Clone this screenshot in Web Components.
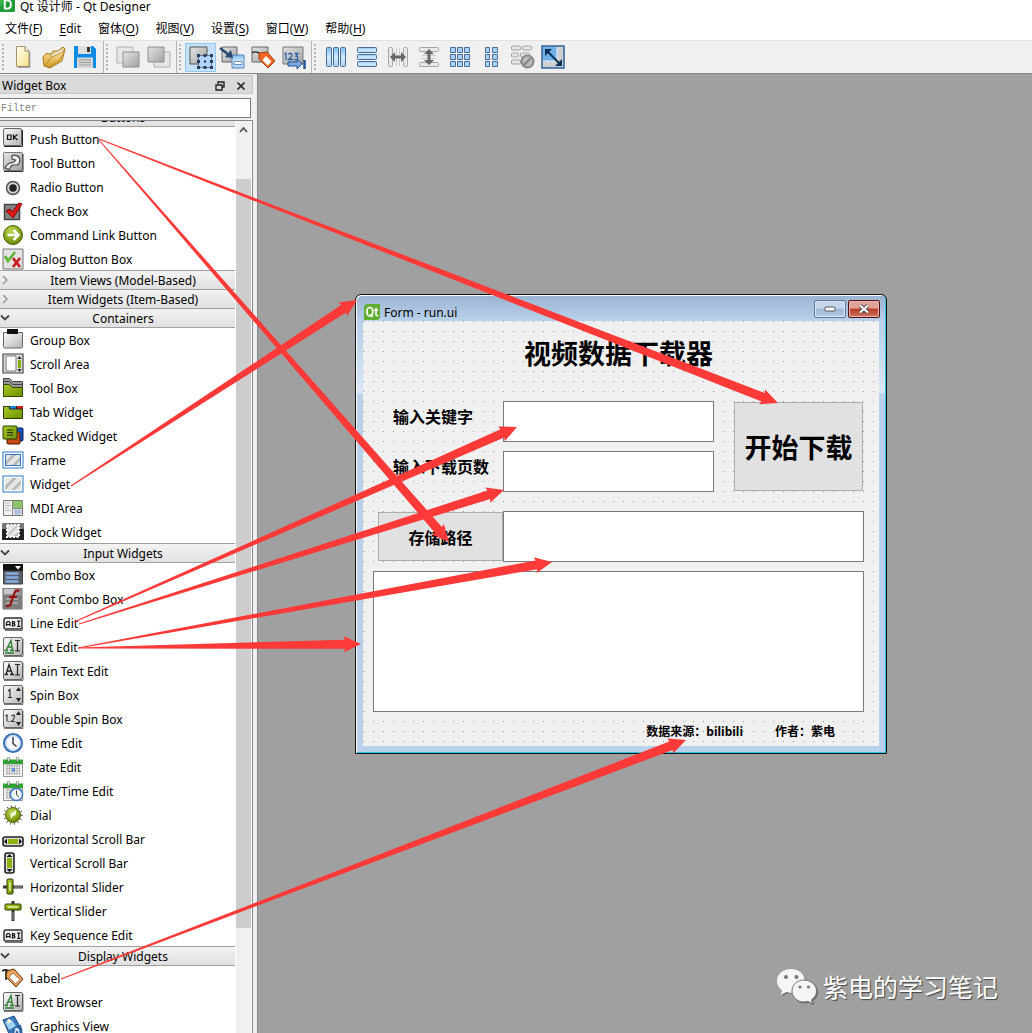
<!DOCTYPE html>
<html lang="zh-CN">
<head>
<meta charset="utf-8">
<title>Qt 设计师 - Qt Designer</title>
<style>
  html, body { margin: 0; height: 100%; }
  body { overflow: hidden; font: 12px/16px "Noto Sans", "Noto Sans CJK SC", sans-serif; color: #000; background: #fff; }
</style>
</head>
<body>
<designer-app>
  <designer-titlebar slot="title">Qt 设计师 - Qt Designer</designer-titlebar>
  <menu-bar slot="menu">
    <menu-entry key="F">文件</menu-entry>
    <menu-entry latin="dit" key="E"></menu-entry>
    <menu-entry key="O">窗体</menu-entry>
    <menu-entry key="V">视图</menu-entry>
    <menu-entry key="S">设置</menu-entry>
    <menu-entry key="W">窗口</menu-entry>
    <menu-entry key="H">帮助</menu-entry>
  </menu-bar>
  <tool-bar slot="tools">
    <tool-group>
      <tool-action icon="new" label="New"></tool-action>
      <tool-action icon="open" label="Open"></tool-action>
      <tool-action icon="save" label="Save"></tool-action>
    </tool-group>
    <tool-group>
      <tool-action icon="toback" label="Send to Back"></tool-action>
      <tool-action icon="tofront" label="Bring to Front"></tool-action>
    </tool-group>
    <tool-group>
      <tool-action icon="editwidgets" label="Edit Widgets" active></tool-action>
      <tool-action icon="signals" label="Edit Signals/Slots"></tool-action>
      <tool-action icon="buddies" label="Edit Buddies"></tool-action>
      <tool-action icon="taborder" label="Edit Tab Order"></tool-action>
    </tool-group>
    <tool-group last>
      <tool-action icon="layh" label="Lay Out Horizontally"></tool-action>
      <tool-action icon="layv" label="Lay Out Vertically"></tool-action>
      <tool-action icon="splith" label="Horizontal Splitter"></tool-action>
      <tool-action icon="splitv" label="Vertical Splitter"></tool-action>
      <tool-action icon="grid" label="Lay Out in a Grid"></tool-action>
      <tool-action icon="formlay" label="Lay Out in a Form"></tool-action>
      <tool-action icon="breaklay" label="Break Layout"></tool-action>
      <tool-action icon="adjust" label="Adjust Size"></tool-action>
    </tool-group>
  </tool-bar>
  <widget-dock slot="dock">
    <widget-category name="Buttons" open>
      <widget-item icon="push">Push Button</widget-item>
      <widget-item icon="tool">Tool Button</widget-item>
      <widget-item icon="radio">Radio Button</widget-item>
      <widget-item icon="check">Check Box</widget-item>
      <widget-item icon="command">Command Link Button</widget-item>
      <widget-item icon="dialog">Dialog Button Box</widget-item>
    </widget-category>
    <widget-category name="Item Views (Model-Based)"></widget-category>
    <widget-category name="Item Widgets (Item-Based)"></widget-category>
    <widget-category name="Containers" open>
      <widget-item icon="group">Group Box</widget-item>
      <widget-item icon="scrollarea">Scroll Area</widget-item>
      <widget-item icon="toolbox">Tool Box</widget-item>
      <widget-item icon="tab">Tab Widget</widget-item>
      <widget-item icon="stacked">Stacked Widget</widget-item>
      <widget-item icon="frame">Frame</widget-item>
      <widget-item icon="widget">Widget</widget-item>
      <widget-item icon="mdi">MDI Area</widget-item>
      <widget-item icon="dock">Dock Widget</widget-item>
    </widget-category>
    <widget-category name="Input Widgets" open>
      <widget-item icon="combo">Combo Box</widget-item>
      <widget-item icon="fontcombo">Font Combo Box</widget-item>
      <widget-item icon="lineedit">Line Edit</widget-item>
      <widget-item icon="textedit">Text Edit</widget-item>
      <widget-item icon="plaintext">Plain Text Edit</widget-item>
      <widget-item icon="spin">Spin Box</widget-item>
      <widget-item icon="dspin">Double Spin Box</widget-item>
      <widget-item icon="time">Time Edit</widget-item>
      <widget-item icon="date">Date Edit</widget-item>
      <widget-item icon="datetime">Date/Time Edit</widget-item>
      <widget-item icon="dial">Dial</widget-item>
      <widget-item icon="hscroll">Horizontal Scroll Bar</widget-item>
      <widget-item icon="vscroll">Vertical Scroll Bar</widget-item>
      <widget-item icon="hslider">Horizontal Slider</widget-item>
      <widget-item icon="vslider">Vertical Slider</widget-item>
      <widget-item icon="lineedit">Key Sequence Edit</widget-item>
    </widget-category>
    <widget-category name="Display Widgets" open>
      <widget-item icon="label">Label</widget-item>
      <widget-item icon="textedit">Text Browser</widget-item>
      <widget-item icon="graphics">Graphics View</widget-item>
    </widget-category>
  </widget-dock>
  <form-window slot="canvas" caption="Form - run.ui">
    <download-form></download-form>
  </form-window>
  <account-mark slot="canvas">紫电的学习笔记</account-mark>
  <arrow-layer slot="overlay"></arrow-layer>
</designer-app>

<script>
const DEFS = `<defs>
<linearGradient id="g" x1="0" y1="0" x2="1" y2="1"><stop offset="0" stop-color="#fdfdfd"/><stop offset="1" stop-color="#b4b4b4"/></linearGradient>
<linearGradient id="dg" x1="0" y1="0" x2="1" y2="1"><stop offset="0" stop-color="#e4e4e4"/><stop offset="1" stop-color="#a2a2a2"/></linearGradient>
<linearGradient id="b" x1="0" y1="0" x2="0" y2="1"><stop offset="0" stop-color="#7dbdf0"/><stop offset=".5" stop-color="#d4ecfd"/><stop offset="1" stop-color="#a9d2f5"/></linearGradient>
<linearGradient id="gn" x1="0" y1="0" x2="1" y2="1"><stop offset="0" stop-color="#a9cc28"/><stop offset="1" stop-color="#6d8f00"/></linearGradient>
<radialGradient id="rb" cx=".4" cy=".3" r=".8"><stop offset="0" stop-color="#b9d94c"/><stop offset="1" stop-color="#5f7f00"/></radialGradient>
<linearGradient id="y" x1="0" y1="0" x2="1" y2="1"><stop offset="0" stop-color="#fffef0"/><stop offset="1" stop-color="#f5e08a"/></linearGradient>
<linearGradient id="or" x1="0" y1="0" x2="0" y2="1"><stop offset="0" stop-color="#fbe7a4"/><stop offset="1" stop-color="#d9a032"/></linearGradient>
</defs>`;

const box = '<rect x="1.5" y="1.5" width="19" height="18" rx="1.5" fill="url(#g)" stroke="#666"/><path d="M2 20.5h19V3" fill="none" stroke="#222" opacity=".6"/>';
const spinArrows = '<path d="M14 7l2.500-4 2.500 4zM14 14l2.500 4 2.500-4z" fill="#222"/>';
const abi = '<rect x="2" y="6" width="18" height="11" rx="1.500" fill="#eee" stroke="#333" stroke-width="1.500"/><path d="M20.500 8v10.500H3" fill="none" stroke="#777"/><path d="M4.500 14v-3l1-1.500h1.500l1 1.500v3M4.500 12.500h3.500M10.500 9.500v4.500h1.500l1-1-1-1.500h-1.500 1.500l.8-1-.8-1zM15 9h3.500M15 14.500h3.500M16.700 9v5.500" fill="none" stroke="#111" stroke-width="1.200"/>';
const hatch = '<rect x="1" y="3" width="20" height="16" fill="#fff" stroke="#2f74c0"/><rect x="3" y="5" width="16" height="12" fill="#e6e6e6"/><path d="M3 13l8-8h4L3 17zM9 17L19 7v4l-6 6z" fill="#b9b9b9"/>';
const clock = '<circle cx="11" cy="11" r="9" fill="#f4f7fb" stroke="#3b74b8" stroke-width="2.200"/><circle cx="11" cy="11" r="7.200" fill="none" stroke="#b9cde5"/><path d="M11 5v6.500l3.500 3" fill="none" stroke="#333" stroke-width="1.400"/>';
const cal = '<path d="M1.500 8h19v12.500h-19z" fill="#f3f3f3" stroke="#999"/><path d="M1 3.500h20V8H1z" fill="#2ea52e"/><path d="M6.500 1v5M15.500 1v5" stroke="#666" stroke-width="2"/><path d="M6.500 1.500v3.500M15.500 1.500v3.500" stroke="#eee"/><path d="M4 10h14M4 12.500h14M4 15h14M4 17.500h14M5 9v10M7.500 9v10M10 9v10M12.500 9v10M15 9v10M17.500 9v10" stroke="#aaa" stroke-width=".8"/>';
const ibeam = '<rect x="1.500" y="1.500" width="19" height="18" rx="1.500" fill="url(#g)" stroke="#666"/><path d="M2 20.500h19V3" fill="none" stroke="#444" opacity=".7"/><path d="M13 4.500h2l.5 .5.500-.5h2M13 15h2l.5-.5.500 .5h2M15.500 5v10" fill="none" stroke="#222" stroke-width="1.200"/>';

const ICONS = {
  qtd: '<rect width="22" height="22" rx="3" fill="#35b04a"/><path d="M0 14L22 2v17a3 3 0 0 1-3 3H0z" fill="#219a38"/><path d="M7 5h4q5 0 5 6t-5 6H7z" fill="none" stroke="#fff" stroke-width="2.800"/>',
  qt: '<path d="M3 0h19v19l-3 3H0V3z" fill="#5fae2f"/><ellipse cx="8" cy="10.500" rx="4" ry="6" fill="none" stroke="#fff" stroke-width="2.400"/><path d="M9 14l3 4M16.500 5v9q0 2.500 3 2M13.500 8.500h6" fill="none" stroke="#fff" stroke-width="2.200"/>',
  new: '<path d="M3.500 .5h8.500l4 4v16H3.500z" fill="url(#y)" stroke="#a39769"/><path d="M12 .5v4.500h4" fill="#fff" stroke="#8f8252"/><path d="M16.800 6v15.300H5" fill="none" stroke="#555" opacity=".6"/>',
  open: '<path d="M0 20l-1-9 3-3.500 5 .5 2-3h5l5-4 2 2-3 12-12 7z" fill="url(#or)" stroke="#a87818"/><path d="M6 10l12-7 2 1-4 7z" fill="#f5f5ef" stroke="#b7a26a" stroke-width=".7"/><path d="M1 20.500l6-9 14-7-5.500 9.500-10 6.500z" fill="url(#or)" stroke="#b7882c"/>',
  save: '<path d="M-1 0h19l3 3v19H-1z" fill="#0c8be6"/><path d="M3 0h13v8H3z" fill="#dedede"/><path d="M12 1h3v5h-3z" fill="#333"/><path d="M2 11.500h16V22H2z" fill="#d5d5d5"/><path d="M4 14h12M4 16.500h12M4 19h12" stroke="#999"/>',
  toback: '<path d="M0 1h16v16H0z" fill="#e6e6e6" stroke="#b0b0b0"/><path d="M6 6h16v15H6z" fill="url(#dg)" stroke="#909090"/>',
  tofront: '<path d="M6 6h16v15H6z" fill="#e6e6e6" stroke="#b0b0b0"/><path d="M0 1h16v15H0z" fill="url(#dg)" stroke="#909090"/>',
  editwidgets: '<path d="M0 1h17v17H0z" fill="url(#dg)" stroke="#555"/><path d="M8.500 9.500h13v12h-13z" fill="#b4d5fb" stroke="#222" stroke-dasharray="1 1"/><path d="M7 8h3v3H7zM13.500 8h3v3h-3zM20 8h3v3h-3zM7 14h3v3H7zM20 14h3v3h-3zM7 20h3v3H7zM13.500 20h3v3h-3zM20 20h3v3h-3z" fill="#233f66"/><path d="M14 14.500h2v2h-2z" fill="#123"/>',
  signals: '<path d="M1 1h15v15H1z" fill="url(#dg)" stroke="#666"/><path d="M11 9h12v13H11z" fill="url(#b)" stroke="#5683bd"/><path d="M13 15.500h8v3h-8z" fill="#fff" stroke="#5279ad" stroke-width=".8"/><path d="M-1 2l9 7" stroke="#294b70" stroke-width="2.500"/><path d="M12 12l-8-1 6-7z" fill="#294b70"/>',
  buddies: '<path d="M0 1h16v15H0z" fill="url(#dg)" stroke="#666"/><path d="M0 7q5-3 9 2" fill="none" stroke="#222" stroke-width="1.300"/><path d="M7 7l8-1 8 9-7 7-9-9z" fill="#f26522" stroke="#a8400c"/><path d="M14 10l5.500 5.500-4 4-5-5.500z" fill="#fff"/>',
  taborder: '<path d="M0 1h20v17H0z" fill="url(#dg)" stroke="#777"/><path d="M1.500 8.500l1.500-1.500v7M5.500 8.500q2-2.500 3.500 0 0 2-3.500 5H10M11.500 7.500h3.500l-2 2.500q2.500 .5 1.500 3-1 1.500-3.500 .5" fill="none" stroke="#2d5fa5" stroke-width="1.300"/><path d="M5 16h9v-3l5 5-5 5v-3H5z" fill="#7ba9e0" stroke="#24518f"/><path d="M21.500 14v9" stroke="#24518f" stroke-width="2.500"/>',
  layh: '<g fill="url(#b)" stroke="#4b6c96"><rect x="1.500" y="1.500" width="5" height="19" rx="1"/><rect x="8.500" y="1.500" width="5" height="19" rx="1"/><rect x="15.500" y="1.500" width="5" height="19" rx="1"/></g>',
  layv: '<g fill="url(#b)" stroke="#4b6c96"><rect x="1.500" y="1.500" width="19" height="5" rx="1"/><rect x="1.500" y="8.500" width="19" height="5" rx="1"/><rect x="1.500" y="15.500" width="19" height="5" rx="1"/></g>',
  splith: '<g fill="#e9e9e9" stroke="#a5a5a5"><rect x="1.500" y="1.500" width="4" height="19" rx="1"/><rect x="16.500" y="1.500" width="4" height="19" rx="1"/></g><path d="M9.500 2v18M12.500 2v18" stroke="#ccc"/><path d="M3 11l5-5v3.500h6V6l5 5-5 5v-3.500H8V16z" fill="#666"/>',
  splitv: '<g fill="#e9e9e9" stroke="#a5a5a5"><rect x="1.500" y="1.500" width="19" height="4" rx="1"/><rect x="1.500" y="16.500" width="19" height="4" rx="1"/></g><path d="M4 9.500h14M4 12.500h14" stroke="#ccc"/><path d="M11 3l5 5h-3.500v6H16l-5 5-5-5h3.500V8H6z" fill="#666"/>',
  grid: '<path d="M1.500 1.500h5v5h-5zM8.500 1.500h5v5h-5zM15.500 1.500h5v5h-5zM1.500 8.500h5v5h-5zM8.500 8.500h5v5h-5zM15.500 8.500h5v5h-5zM1.500 15.500h5v5h-5zM8.500 15.500h5v5h-5zM15.500 15.500h5v5h-5z" fill="#a5d5f8" stroke="#4b6c96"/>',
  formlay: '<path d="M5.500 1.500h4v5h-4zM12.500 1.500h5v5h-5zM5.500 8.500h4v5h-4zM12.500 8.500h5v5h-5zM5.500 15.500h4v5h-4zM12.500 15.500h5v5h-5z" fill="#a5d5f8" stroke="#4b6c96"/>',
  breaklay: '<g fill="#e6e6e6" stroke="#a5a5a5"><rect x=".5" y="0" width="9" height="4" rx="1"/><rect x="11.500" y="0" width="9" height="4" rx="1"/><rect x=".5" y="7" width="7" height="4" rx="1"/><rect x="9.500" y="7" width="9" height="4" rx="1"/><rect x=".5" y="14" width="9" height="4" rx="1"/></g><circle cx="16.500" cy="15.500" r="6" fill="#bbb" stroke="#8a8a8a" stroke-width="2"/><path d="M13 19l7-7" stroke="#858585" stroke-width="2"/>',
  adjust: '<path d="M0 0h22v22H0z" fill="#cfcfcf" stroke="#2f5f9b" stroke-width="1.500"/><path d="M1 1h14v14H1z" fill="#6fb0e8"/><path d="M1 15h14V1" fill="none" stroke="#e8f2fc"/><path d="M5 5l13 13" stroke="#0b3157" stroke-width="2"/><path d="M3 3h7l-7 7zM20 20h-7l7-7z" fill="#0b3157"/>',
  push: '<rect x="1.500" y=".5" width="18" height="17" rx="1.500" fill="url(#g)" stroke="#666"/><path d="M2 18.500h18.500V2" fill="none" stroke="#222"/><path d="M5.500 7h3.500v4.500H5.500zM11.500 6.500v5.500M15.500 6.500l-3.500 2.500 3.500 3" fill="none" stroke="#111" stroke-width="1.200"/>',
  tool: '<rect x="1.500" y=".5" width="19" height="18" rx="1" fill="url(#dg)" stroke="#777"/><path d="M2 19.500h19V2" fill="none" stroke="#333"/><path d="M10 3.500q5-1.500 7.500 2.500 1.500 5-2.500 7l-5 0-3 4.500-4-1.500q1-3.500 5-5l4-1 1.500-2-3.500-1z" fill="#eee" stroke="#444" stroke-width="1.200"/>',
  radio: '<circle cx="11" cy="12" r="6.500" fill="#d0d0d0" stroke="#555" stroke-width="1.500"/><circle cx="11" cy="12" r="3.700" fill="#222"/>',
  check: '<path d="M2.500 4.500h15v15h-15z" fill="#858585" stroke="#444" stroke-width="1.500"/><path d="M4 11l4-2 2 3 7-9 3 1-9 14z" fill="#e11b1b" stroke="#800"/>',
  command: '<circle cx="11" cy="11" r="9.500" fill="url(#rb)" stroke="#4c6107"/><path d="M5.500 11h10M11.500 6l5 5-5 5" fill="none" stroke="#fff" stroke-width="2.500"/>',
  dialog: '<path d="M1 1h20v20H1z" fill="#e2e2e2" stroke="#777"/><path d="M3 8l3 5 7-9" fill="none" stroke="#5bb531" stroke-width="2.500"/><path d="M11 10l7 9M18 10l-7 9" stroke="#c82020" stroke-width="2.800"/>',
  group: '<path d="M1.500 3.500h19v14q0 1.500-1.500 1.500H3q-1.500 0-1.500-1.500z" fill="url(#g)" stroke="#666"/><path d="M5 0h11v5H5z" fill="#111"/>',
  scrollarea: '<path d="M1 1h20v19H1z" fill="#ddd" stroke="#444" stroke-width="1.200"/><path d="M4 3h10v15H4z" fill="#fff" stroke="#777"/><path d="M16 7h3v8h-3z" fill="#86ad0b"/><path d="M15.500 6L17.500 3l2 3zM15.500 16l2 3 2-3z" fill="#222"/>',
  toolbox: '<path d="M1.500 1.500h6l3 3h10v15h-19z" fill="#999" stroke="#444"/><path d="M1.500 4.500h6l3 3h10" fill="none" stroke="#444"/><path d="M1.500 7.500h6l3 3h10v9h-19z" fill="url(#gn)" stroke="#354a00"/>',
  tab: '<path d="M1.500 5.500h19v12h-19z" fill="url(#gn)" stroke="#2b3a00"/><path d="M8 5h6v3H8z" fill="#1688d8"/><path d="M15 5h6v3h-6z" fill="#d32020"/><path d="M14.500 5v3M7.500 8h13M7.500 5v3" stroke="#222"/>',
  stacked: '<rect x="9" y="3" width="12" height="13" rx="1" fill="#1252c8" stroke="#061f52"/><rect x="5" y="7" width="13" height="12" rx="1" fill="#c44a17" stroke="#4c1800"/><rect x="1" y="1" width="14" height="13" rx="1" fill="url(#gn)" stroke="#2c3c00"/><path d="M5 5h6M5 7.500h6M5 10h6" stroke="#222"/>',
  frame: hatch + '<path d="M3.500 5.500h15v11h-15z" fill="none" stroke="#2f74c0"/>',
  widget: hatch,
  mdi: '<path d="M1.500 3.500h19v15h-19z" fill="#f1f1f1" stroke="#777"/><path d="M11 4h9.500v7H11z" fill="#8cc36b"/><path d="M10.500 4v14.500M10.500 11.500h10" stroke="#888"/><path d="M3 6h5M3 8.500h6M3 11h4M3 13.500h6" stroke="#bbb"/><path d="M12 14h8M12 16h8M14 12v6M17 12v6" stroke="#8ba9d2"/>',
  dock: '<path d="M0 2h22v17H0z" fill="#222"/><path d="M0 2h22v6H0z" fill="#777"/><path d="M5 4h12v12H5z" fill="#e7e7e7" stroke="#fff" stroke-width="2" stroke-dasharray="2 1.500"/><path d="M6 13l8-8h2L7 14zM12 15l4-4v4z" fill="#bcbcbc"/>',
  combo: '<path d="M1 0h20v7H1z" fill="#111"/><path d="M13 2h6L16 5.500z" fill="#fff"/><path d="M1.500 7h19v13h-19z" fill="#5a5f68" stroke="#444"/><path d="M3.500 9.500h13M3.500 13.500h13M3.500 17.500h13" stroke="#82aee2" stroke-width="2.500"/>',
  fontcombo: '<path d="M1 0h19v21H1z" fill="#999" stroke="#666"/><path d="M2 7h17v13H2z" fill="#7d7d7d"/><path d="M2 1h10v5H2z" fill="#c6c6c6"/><path d="M4 11h12M4 15h12" stroke="#a5a5a5" stroke-width="2"/><path d="M17.500 3q-4-2-5.500 3l-3 9q-1 4-5 3M7 9h8" fill="none" stroke="#9a1010" stroke-width="2.200"/>',
  lineedit: abi,
  textedit: ibeam + '<path d="M2.500 14.500h3.500M8 14.500h4M4 14.500L9 4.500l1.500 10M6 11h4M3 17h9" fill="none" stroke="#267d2c" stroke-width="1.300"/>',
  plaintext: ibeam + '<path d="M2.500 14.500h3.500M8 14.500h4M4 14.500L7 4.500l3.500 10M5 11h4" fill="none" stroke="#222" stroke-width="1.300"/>',
  spin: box + '<path d="M6 7l2-1.500v8M6 13.500h4" fill="none" stroke="#333" stroke-width="1.200"/>' + spinArrows,
  dspin: box + '<path d="M3.500 8l1.500-1v6.500M7 13v1M9.500 8q3-2 3 .5 0 2-3 5h3.500" fill="none" stroke="#333" stroke-width="1.100"/>' + spinArrows,
  time: clock,
  date: cal + '<path d="M10 12.500h3v3h-3z" fill="#4c8ae0"/>',
  datetime: cal + '<g transform="translate(7 7) scale(.68)">' + clock + '</g>',
  dial: '<circle cx="11" cy="11" r="9" fill="none" stroke="#555" stroke-width="1.600" stroke-dasharray="1 3"/><circle cx="11" cy="11" r="7.500" fill="url(#rb)" stroke="#4c6107"/><path d="M8 10l6-4 0 5-3 1-2 3z" fill="#eef6cf"/>',
  hscroll: '<rect x="1" y="9" width="20" height="9" rx="2" fill="#ddd" stroke="#222" stroke-width="1.600"/><path d="M6 11h10v5H6z" fill="#8bb20f"/><path d="M5 10.500v6L2 13.500zM17 10.500v6l3-3z" fill="#111"/>',
  vscroll: '<rect x="3" y="1" width="9" height="20" rx="2" fill="#ddd" stroke="#222" stroke-width="1.600"/><path d="M5 6h5v10H5z" fill="#8bb20f"/><path d="M4.500 5h6l-3-3zM4.500 17h6l-3 3z" fill="#111"/>',
  hslider: '<path d="M1 11h20" stroke="#333" stroke-width="3"/><path d="M12 11h8" stroke="#aaa"/><rect x="5" y="3" width="6" height="15" rx="1" fill="url(#gn)" stroke="#2b3a00"/><path d="M8 6v9" stroke="#e6f3b0" stroke-width="1.500"/>',
  vslider: '<path d="M11 1v20" stroke="#333" stroke-width="3"/><path d="M11 12v8" stroke="#999"/><rect x="3" y="4" width="16" height="6" rx="1" fill="url(#gn)" stroke="#2b3a00"/><path d="M6 7h10" stroke="#e6f3b0" stroke-width="1.500"/>',
  label: '<path d="M4 13V4M0 4q5-3 9 2" fill="none" stroke="#111" stroke-width="1.500"/><path d="M5 4l7-2 9 10-7 8L4 10z" fill="#eca15c" stroke="#5b3410"/><path d="M11 6l7 6.500L13.500 17 7 10z" fill="#fff" stroke="#9b5e27" stroke-width=".8"/>',
  graphics: '<path d="M1 5l11-4 8 14-12 6z" fill="#3978bd" stroke="#234d80"/><path d="M3 7l7-2 4 6-7 4z" fill="#9ed0f1"/><circle cx="7" cy="6" r="2" fill="#f6f4cc"/><path d="M12 12l7-2 2 10H10z" fill="#2b5e9d"/><path d="M13 14q4-2 4 5-4 1-4-2t4-1" fill="none" stroke="#cfe4f7" stroke-width="1.500"/>'
};

const svg = (name, size) => `<svg viewBox="0 0 22 22" width="${size}" height="${size}" aria-hidden="true">${DEFS}${ICONS[name] || ''}</svg>`;

const define = (tag, render) => customElements.define(tag, class extends HTMLElement {
  constructor() { super(); this.attachShadow({ mode: 'open' }); }
  connectedCallback() { this.shadowRoot.innerHTML = render(this); }
});

define('designer-app', () => `<style>
  :host { display: flex; flex-direction: column; height: 100vh; position: relative; overflow: hidden; background: #fff; }
  .main { flex: 1; display: flex; min-height: 0; background: #f0f0f0; }
  .canvas { flex: 1; position: relative; background: #a0a0a0; border-left: 1px solid #828790; }
</style>
<slot name="title"></slot><slot name="menu"></slot><slot name="tools"></slot>
<div class="main"><slot name="dock"></slot><main class="canvas"><slot name="canvas"></slot></main></div>
<slot name="overlay"></slot>`);

define('designer-titlebar', () => `<style>
  :host { display: flex; height: 18px; gap: 5px; line-height: 14px; }
  svg { margin-top: -3px; display: block; }
</style>${svg('qtd', 15)}<span><slot></slot></span>`);

define('menu-bar', () => `<style>
  :host { display: block; }
  nav { display: flex; align-items: center; height: 22px; padding-left: 5px; gap: 17px; }
</style><nav><slot></slot></nav>`);

define('menu-entry', el => {
  const key = el.getAttribute('key'), latin = el.getAttribute('latin');
  return `<style>
  :host { display: block; }
  button { all: unset; display: block; font: inherit; line-height: 18px; white-space: nowrap; }
  u { text-underline-offset: 2px; }
</style><button type="button">${latin ? `<u>${key}</u>${latin}` : `<slot></slot>(<u>${key}</u>)`}</button>`;
});

define('tool-bar', () => `<style>
  :host { display: flex; height: 32px; background: #f0f0f0; border-top: 1px solid #e2e2e2; border-bottom: 1px solid #85858f; }
</style><slot></slot>`);

define('tool-group', () => `<style>
  :host { display: flex; align-items: center; padding: 0 2px; border-right: 1px solid #b5b5b5; }
  :host([last]) { border-right: 0; }
  i { width: 2px; height: 26px; margin-right: 4px; background: repeating-linear-gradient(#b8b8b8 0 2px, transparent 2px 4px); }
</style><i></i><slot></slot>`);

define('tool-action', el => `<style>
  :host { display: block; }
  button { all: unset; box-sizing: border-box; display: grid; place-items: center; width: 31px; height: 29px; }
  :host([active]) button { background: #c5e0f7; border: 1px solid #90c8f6; }
  svg { display: block; overflow: visible; }
</style><button type="button" aria-label="${el.getAttribute('label')}">${svg(el.getAttribute('icon'), 22)}</button>`);

define('widget-dock', () => `<style>
  :host { flex: 0 0 257px; box-sizing: border-box; display: flex; flex-direction: column; padding: 1px 4px 0 0; min-height: 0; }
  header { display: flex; align-items: center; box-sizing: border-box; height: 19px; margin-bottom: 4px; padding: 2px 6px 0 2px; background: #d9d9d9; border: solid #c8c8c8; border-width: 1px 1px 1px 0; }
  h2 { flex: 1; margin: 0; font: inherit; line-height: 16px; }
  header button { all: unset; width: 10px; height: 10px; margin-left: 11px; }
  header svg { display: block; }
  input { box-sizing: border-box; height: 20px; margin: 0 2px 2px 0; padding: 0 0 0 1px; border: solid #7a7a7a; border-width: 1px 1px 1px 0; border-radius: 0; background: #fff; font: 10px/16px "Liberation Mono", monospace; }
  input::placeholder { color: #808080; opacity: 1; }
  .frame { flex: 1; display: flex; min-height: 0; border: solid #828790; border-width: 1px 1px 0 0; background: #fff; overflow: hidden; }
  .list { flex: 1; min-height: 0; overflow: hidden; }
  .list slot { display: block; margin-top: -13px; }
  .bar { flex: 0 0 15px; margin: 0 1px; display: grid; grid-template-rows: 58px 1fr 105px; background: #f0f0f0; }
  .bar svg { margin: 5px 0 0 3px; }
  .thumb { background: #cdcdcd; }
</style>
<header><h2>Widget Box</h2>
  <button type="button" aria-label="Float"><svg width="10" height="10"><path d="M3 3V1h6v5H7M1 4h6v5H1z" fill="none" stroke="#222" stroke-width="1.400"/></svg></button>
  <button type="button" aria-label="Close"><svg width="10" height="10"><path d="M1.500 1.500l7 7M8.500 1.500l-7 7" stroke="#222" stroke-width="1.700"/></svg></button>
</header>
<input type="text" placeholder="Filter" aria-label="Filter">
<div class="frame"><div class="list"><slot></slot></div>
<div class="bar"><svg width="9" height="8"><path d="M1 6l3.500-4L8 6" fill="none" stroke="#505050" stroke-width="1.800"/></svg><div class="thumb"></div></div></div>`);

define('widget-category', el => {
  const open = el.hasAttribute('open');
  const mark = open ? '<path d="M1 2.500l4 4 4-4" fill="none" stroke="#444" stroke-width="1.800"/>' : '<path d="M3 1l4 4-4 4" fill="none" stroke="#999" stroke-width="1.500"/>';
  return `<style>
  :host { display: block; }
  button { all: unset; box-sizing: border-box; display: flex; align-items: center; width: 100%; height: 19px; position: relative; border-bottom: 1px solid #a0a0a0; box-shadow: 0 -1px #a0a0a0; background: linear-gradient(#f3f3f3, #e0e0e0); }
  span { flex: 1; text-align: center; line-height: 16px; padding-top: 2px; }
  svg { flex: none; }
</style><button type="button" aria-expanded="${open}"><svg width="11" height="10" aria-hidden="true">${mark}</svg><span>${el.getAttribute('name')}</span></button><slot></slot>`;
});

define('widget-item', el => `<style>
  :host { display: flex; align-items: center; height: 24px; padding-left: 2px; gap: 6px; }
  svg { display: block; flex: none; }
  span { line-height: 16px; padding-top: 1px; white-space: nowrap; }
</style>${svg(el.getAttribute('icon'), 22)}<span><slot></slot></span>`);

define('form-window', el => `<style>
  :host { position: absolute; left: 97px; top: 220px; box-sizing: border-box; width: 532px; border: 1px solid #111; border-radius: 6px 6px 0 0; overflow: hidden; background: linear-gradient(#9ab3d0 0, #b9d1ea 26px, #bcd3ec 40px, #dbe8f6 98px, #b9d1ea 99px); box-shadow: inset 1px 1px #fff, inset -1px -1px #27c8e0; }
  header { display: flex; align-items: center; height: 26px; padding: 0 6px 0 8px; gap: 4px; }
  header svg { margin-top: 7px; }
  h1 { flex: 1; margin: 9px 0 0; font: inherit; }
  button { all: unset; box-sizing: border-box; width: 32px; height: 18px; margin: 2px 0 0; display: grid; place-items: center; border: 1px solid #61799a; border-radius: 2px; background: linear-gradient(#c3d6ea 45%, #9db7d3 50%, #b5cde6); box-shadow: inset 0 0 0 1px #d7e5f3; }
  .close { margin-left: -2px; border-color: #4b1219; background: linear-gradient(#e3a197 45%, #b93a25 50%, #cf7560); box-shadow: inset 0 0 0 1px #e7b6ab; }
  header button svg { margin: 0; }
  .body { margin: 0 7px 7px; }
</style>
<header>${svg('qt', 16)}<h1>${el.getAttribute('caption')}</h1>
<button type="button" aria-label="Minimize"><svg width="12" height="6"><rect x="1" y="1" width="10" height="4" rx="1" fill="#fff" stroke="#555"/></svg></button>
<button type="button" class="close" aria-label="Close"><svg width="12" height="10"><path d="M2 1.500l8 7M10 1.500l-8 7" stroke="#4a4a55" stroke-width="4"/><path d="M2 1.500l8 7M10 1.500l-8 7" stroke="#fff" stroke-width="2.200"/></svg></button>
</header><div class="body"><slot></slot></div>`);

define('download-form', () => `<style>
  :host { display: block; font-family: "Noto Sans CJK SC", sans-serif; font-weight: 700; }
  form { padding: 0 15px 4px 10px; background: linear-gradient(transparent 1px, #f0f0f0 1px) 0 0 / 10px 10px, linear-gradient(90deg, #9a9a9a 1px, #f0f0f0 1px) 0 0 / 10px 10px; }
  h2 { margin: 0 0 16px; font-size: 27px; line-height: 64px; text-align: center; }
  .fields { display: grid; grid-template-columns: 130px 1fr 130px; grid-template-rows: 41px 41px; row-gap: 9px; }
  label { padding-left: 20px; font-size: 16px; line-height: 30px; }
  input, textarea { box-sizing: border-box; width: 100%; margin: 0; border: 1px solid #7a7a7a; border-radius: 0; background: #fff; resize: none; display: block; font: inherit; }
  button { box-sizing: border-box; margin: 0; padding: 0; border: 1px solid #adadad; border-radius: 0; background: #e1e1e1; color: #000; font: inherit; font-size: 16px; }
  .go { grid-column: 3; grid-row: 1 / 3; margin: 1px 1px 1px 0; font-size: 27px; }
  .fields input { justify-self: start; width: calc(100% - 20px); }
  .path { display: grid; grid-template-columns: 125px 1fr; margin: 19px 0 9px; padding-left: 5px; height: 51px; }
  .path button { margin: 1px 0; }
  .log { height: 141px; }
  footer { display: flex; justify-content: flex-end; gap: 32px; margin-top: 10px; padding-right: 29px; line-height: 20px; font-family: "Noto Sans", "Noto Sans CJK SC", sans-serif; }
</style>
<form>
  <h2>视频数据下载器</h2>
  <div class="fields">
    <label for="kw">输入关键字</label><input id="kw" type="text">
    <button type="button" class="go">开始下载</button>
    <label for="pages">输入下载页数</label><input id="pages" type="text">
  </div>
  <div class="path"><button type="button">存储路径</button><textarea aria-label="存储路径"></textarea></div>
  <textarea class="log" aria-label="下载记录"></textarea>
  <footer><span>数据来源：bilibili</span><span>作者：紫电</span></footer>
</form>`);

define('account-mark', () => `<style>
  :host { position: absolute; right: 34px; bottom: 29px; display: flex; align-items: center; gap: 6px; font: 25px/36px "Noto Sans CJK SC", sans-serif; color: #fff; text-shadow: 1px 1px 1px #444; white-space: nowrap; }
  svg { display: block; filter: drop-shadow(1px 1px 0 #666); }
</style>
<svg width="40" height="36" viewBox="0 0 40 36" aria-hidden="true">
<path d="M14 1C6 1 0 6 0 13c0 4 2 7 5 9.500L4 27l5.500-3 4.500 1c8 0 14-5 14-12S22 1 14 1z" fill="#f5f5f5"/>
<path d="M27 12c-7 0-12 5-12 11s5 11 12 11l4-.6 4.500 2.300-1-4C38 29.500 39.500 26.500 39.500 23c0-6-5.500-11-12.500-11z" fill="#f5f5f5" stroke="#777"/>
<g fill="#777"><circle cx="9" cy="9" r="2"/><circle cx="19.500" cy="9" r="2"/><circle cx="23" cy="19" r="1.600"/><circle cx="31.500" cy="19" r="1.600"/></g></svg><span><slot></slot></span>`);

/* Each arrow runs from a palette entry to the widget it became on the form. */
const ARROWS = [
  [99, 139, 778, 403], [99, 140, 449, 542], [71, 486, 357, 300], [74, 622, 517, 427],
  [79, 624, 504, 490], [78, 648, 552, 562], [78, 648, 361, 644], [61, 979, 686, 740]
];
const taper = ([x1, y1, x2, y2]) => {
  const len = Math.hypot(x2 - x1, y2 - y1), ux = (x2 - x1) / len, uy = (y2 - y1) / len;
  const at = (back, side) => `${(x2 - ux * back - uy * side).toFixed(1)},${(y2 - uy * back + ux * side).toFixed(1)}`;
  return `<polygon points="${[at(len, -.5), at(16, -4.5), at(17, -8), at(0, 0), at(17, 8), at(16, 4.5), at(len, .5)].join(' ')}"/>`;
};
define('arrow-layer', () => `<style>
  :host { position: absolute; inset: 0; pointer-events: none; }
  svg { display: block; width: 100%; height: 100%; fill: #fd3a38; }
</style><svg aria-hidden="true">${ARROWS.map(taper).join('')}</svg>`);
</script>
</body>
</html>
